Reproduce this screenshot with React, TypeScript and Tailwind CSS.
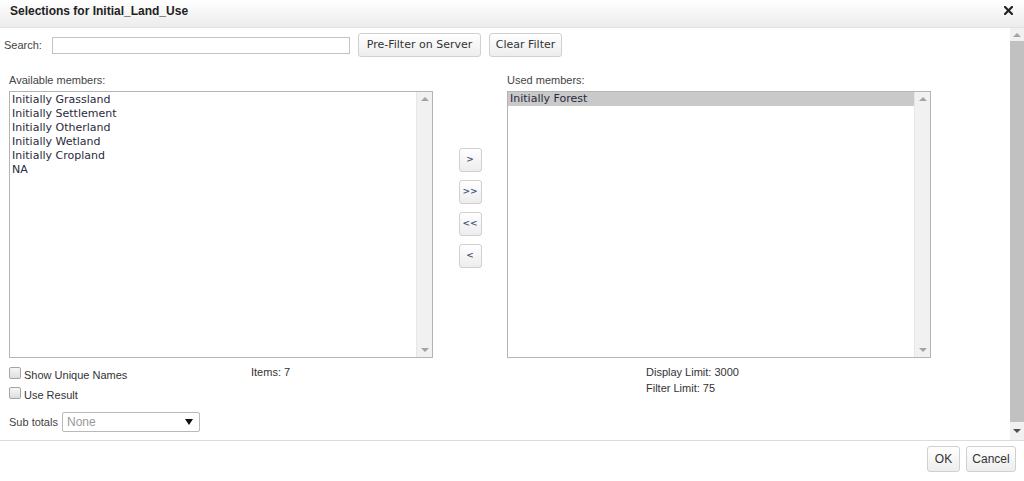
import React from "react";

const sans = { fontFamily: '"Liberation Sans", Arial, sans-serif' };
const verdana = { fontFamily: '"DejaVu Sans", Verdana, sans-serif' };

const available = [
  "Initially Grassland",
  "Initially Settlement",
  "Initially Otherland",
  "Initially Wetland",
  "Initially Cropland",
  "NA",
];

function Btn({
  children,
  className = "",
}: {
  children: React.ReactNode;
  className?: string;
}) {
  return (
    <button
      className={
        "flex items-center justify-center rounded-[3px] border border-[#d0d0d0] bg-gradient-to-b from-white to-[#ededed] text-[#333] " +
        className
      }
    >
      {children}
    </button>
  );
}

function ListScroll() {
  return (
    <div className="flex w-[16px] flex-col items-center justify-between border-l border-[#e6e6e6] bg-[#f1f1f1] py-[5px]">
      <div className="h-0 w-0 border-x-[4px] border-b-[4px] border-x-transparent border-b-[#a3a3a3]" />
      <div className="h-0 w-0 border-x-[4px] border-t-[4px] border-x-transparent border-t-[#a3a3a3]" />
    </div>
  );
}

function Checkbox({ label }: { label: string }) {
  return (
    <div className="flex h-[20px] items-center gap-[3px]">
      <span className="mt-[-3px] inline-block h-[12px] w-[12px] rounded-[2px] border border-[#a5a5a5] bg-gradient-to-b from-[#f7f7f7] to-[#dedede]" />
      <span className="mt-[3px] text-[11px] text-[#333]">{label}</span>
    </div>
  );
}

export default function App() {
  return (
    <div
      className="flex h-[481px] w-[1024px] flex-col overflow-hidden bg-white text-[#333]"
      style={sans}
    >
      {/* title bar */}
      <div className="flex h-[28px] shrink-0 items-start justify-between border-b border-[#e2e2e2] bg-gradient-to-b from-white to-[#ececec] pl-[10px] pr-[11px] pt-[3px]">
        <span className="text-[12px] font-bold leading-[16px] text-[#222]">
          Selections for Initial_Land_Use
        </span>
        <svg width="9" height="9" viewBox="0 0 9 9" className="mt-[3px]">
          <path
            d="M1 1 L8 8 M8 1 L1 8"
            stroke="#222"
            strokeWidth="2.2"
            strokeLinecap="square"
          />
        </svg>
      </div>

      {/* content */}
      <div className="flex h-[412px] shrink-0">
        <div className="flex-1">
          {/* search row */}
          <div className="flex h-[24px] items-center pl-[4px] mt-[5px]">
            <span className="w-[48px] text-[11px] text-[#444]">Search:</span>
            <div className="h-[17px] w-[298px] border border-[#c3c3c3] bg-white" />
            <Btn className="ml-[8px] h-[24px] w-[123px] text-[11px]">
              <span style={verdana}>Pre-Filter on Server</span>
            </Btn>
            <Btn className="ml-[8px] h-[24px] w-[73px] text-[11px]">
              <span style={verdana}>Clear Filter</span>
            </Btn>
          </div>

          {/* labels */}
          <div className="mt-[16px] flex h-[14px] items-center pl-[9px] text-[11px] text-[#444]">
            <span className="w-[498px]">Available members:</span>
            <span>Used members:</span>
          </div>

          {/* lists */}
          <div className="mt-[4px] flex pl-[9px]">
            <div className="flex h-[267px] w-[424px] border border-[#b4b4b4] bg-white">
              <div
                className="flex-1 pl-[2px] pt-[1px] text-[11px] leading-[14px] text-[#2a2a40]"
                style={verdana}
              >
                {available.map((m) => (
                  <div key={m}>{m}</div>
                ))}
              </div>
              <ListScroll />
            </div>

            <div className="flex w-[74px] flex-col items-center gap-[8px] pt-[57px]">
              {[">", ">>", "<<", "<"].map((s) => (
                <Btn
                  key={s}
                  className="h-[24px] w-[23px] text-[9px] font-bold"
                >
                  <span className="text-[#4a5a7a]" style={verdana}>
                    {s}
                  </span>
                </Btn>
              ))}
            </div>

            <div className="flex h-[267px] w-[424px] border border-[#b4b4b4] bg-white">
              <div
                className="flex-1 pl-0 pt-0 text-[11px] leading-[14px] text-[#2a2a40]"
                style={verdana}
              >
                <div className="bg-[#c9c9c9] pl-[2px]">Initially Forest</div>
              </div>
              <ListScroll />
            </div>
          </div>

          {/* below lists */}
          <div className="mt-[6px] flex pl-[9px]">
            <div className="flex w-[242px] flex-col">
              <Checkbox label="Show Unique Names" />
              <Checkbox label="Use Result" />
            </div>
            <div className="w-[256px] text-[11px] leading-[16px]">Items: 7</div>
            <div className="pl-[139px] text-[11px] leading-[16px]">
              <div>Display Limit: 3000</div>
              <div>Filter Limit: 75</div>
            </div>
          </div>

          <div className="mt-[8px] flex items-center pl-[9px]">
            <span className="w-[53px] text-[11px] text-[#444]">Sub totals</span>
            <div className="flex h-[20px] w-[138px] items-center justify-between rounded-[2px] border border-[#b9b9b9] bg-white pl-[4px] pr-[6px]">
              <span className="text-[12px] text-[#999]">None</span>
              <svg width="8" height="6" viewBox="0 0 8 6">
                <path d="M0 0 H8 L4 6 Z" fill="#111" />
              </svg>
            </div>
          </div>
        </div>

        {/* outer scrollbar */}
        <div className="flex w-[14px] flex-col items-center bg-[#f1f1f1]">
          <div className="flex h-[13px] items-center">
            <div className="h-0 w-0 border-x-[4px] border-b-[4px] border-x-transparent border-b-[#a3a3a3]" />
          </div>
          <div className="h-[381px] w-full bg-[#c1c1c1]" />
          <div className="flex flex-1 items-center">
            <div className="h-0 w-0 border-x-[4px] border-t-[4px] border-x-transparent border-t-[#505050]" />
          </div>
        </div>
      </div>

      {/* footer */}
      <div className="flex flex-1 items-start justify-end gap-[6px] border-t border-[#dcdcdc] pr-[8px] pt-[5px]">
        <Btn className="h-[26px] w-[33px] text-[12px]">OK</Btn>
        <Btn className="h-[26px] w-[50px] text-[12px]">Cancel</Btn>
      </div>
    </div>
  );
}
